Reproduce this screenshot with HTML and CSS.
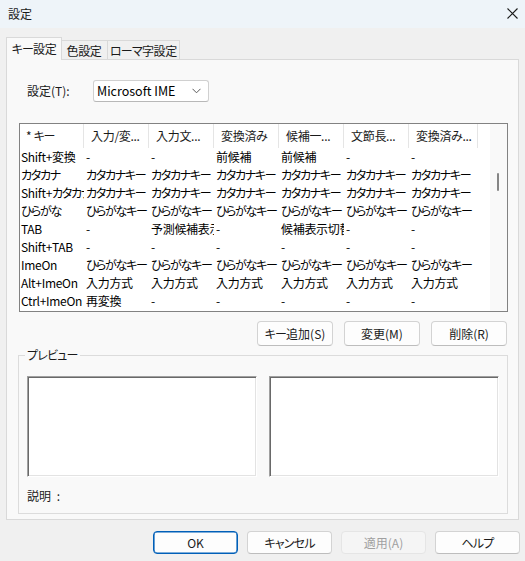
FILE: index.html
```html
<!DOCTYPE html>
<html lang="ja">
<head>
<meta charset="utf-8">
<title>設定</title>
<link rel="stylesheet" href="styles.css">
</head>
<body>
<div class="dialog">
  <div class="titlebar">
    <span class="title">設定</span>
    <svg class="close" width="11" height="11" viewBox="0 0 11 11"><path d="M0.5 0.5L10.5 10.5M10.5 0.5L0.5 10.5" stroke="#1a1a1a" stroke-width="1.1" fill="none"/></svg>
  </div>
  <div class="tabs">
    <div class="tab active"><span class="k">キー</span>設定</div>
    <div class="tab t2">色設定</div>
    <div class="tab t3"><span class="k">ローマ</span>字設定</div>
  </div>
  <div class="panel">
    <div class="setting-row">
      <span class="label">設定(T):</span>
      <div class="combo">
        <span>Microsoft IME</span>
        <svg class="chev" width="9" height="6" viewBox="0 0 9 6"><path d="M0.5 0.8L4.5 4.8L8.5 0.8" stroke="#5a5a5a" stroke-width="1" fill="none"/></svg>
      </div>
    </div>
    <div class="list">
      <div class="list-body">
        <div class="row header">
          <div class="cell c1">* <span class="k">キー</span></div>
          <div class="cell">入力/変...</div>
          <div class="cell">入力文...</div>
          <div class="cell">変換済み</div>
          <div class="cell">候補一...</div>
          <div class="cell">文節長...</div>
          <div class="cell c7">変換済み...</div>
        </div>
        <div class="row"><div class="cell c1">Shift+変換</div><div class="cell">-</div><div class="cell">-</div><div class="cell">前候補</div><div class="cell">前候補</div><div class="cell">-</div><div class="cell c7">-</div></div>
        <div class="row"><div class="cell c1 k">カタカナ</div><div class="cell k">カタカナキー</div><div class="cell k">カタカナキー</div><div class="cell k">カタカナキー</div><div class="cell k">カタカナキー</div><div class="cell k">カタカナキー</div><div class="cell c7 k">カタカナキー</div></div>
        <div class="row"><div class="cell c1">Shift+<span class="k">カタカナ</span></div><div class="cell k">カタカナキー</div><div class="cell k">カタカナキー</div><div class="cell k">カタカナキー</div><div class="cell k">カタカナキー</div><div class="cell k">カタカナキー</div><div class="cell c7 k">カタカナキー</div></div>
        <div class="row"><div class="cell c1 k">ひらがな</div><div class="cell k">ひらがなキー</div><div class="cell k">ひらがなキー</div><div class="cell k">ひらがなキー</div><div class="cell k">ひらがなキー</div><div class="cell k">ひらがなキー</div><div class="cell c7 k">ひらがなキー</div></div>
        <div class="row"><div class="cell c1">TAB</div><div class="cell">-</div><div class="cell">予測候補表示</div><div class="cell">-</div><div class="cell">候補表示切替</div><div class="cell">-</div><div class="cell c7">-</div></div>
        <div class="row"><div class="cell c1">Shift+TAB</div><div class="cell">-</div><div class="cell">-</div><div class="cell">-</div><div class="cell">-</div><div class="cell">-</div><div class="cell c7">-</div></div>
        <div class="row"><div class="cell c1">ImeOn</div><div class="cell k">ひらがなキー</div><div class="cell k">ひらがなキー</div><div class="cell k">ひらがなキー</div><div class="cell k">ひらがなキー</div><div class="cell k">ひらがなキー</div><div class="cell c7 k">ひらがなキー</div></div>
        <div class="row"><div class="cell c1">Alt+ImeOn</div><div class="cell">入力方式</div><div class="cell">入力方式</div><div class="cell">入力方式</div><div class="cell">入力方式</div><div class="cell">入力方式</div><div class="cell c7">入力方式</div></div>
        <div class="row"><div class="cell c1">Ctrl+ImeOn</div><div class="cell">再変換</div><div class="cell">-</div><div class="cell">-</div><div class="cell">-</div><div class="cell">-</div><div class="cell c7">-</div></div>
      </div>
      <div class="scrollbar"><div class="thumb"></div></div>
    </div>
    <div class="btn-row">
      <button class="btn"><span class="k">キー</span>追加(S)</button>
      <button class="btn">変更(M)</button>
      <button class="btn">削除(R)</button>
    </div>
    <div class="group">
      <span class="group-label k">プレビュー</span>
      <div class="previews">
        <div class="preview"></div>
        <div class="preview"></div>
      </div>
      <div class="desc">説明 :</div>
    </div>
  </div>
  <div class="footer">
    <button class="fbtn ok">OK</button>
    <button class="fbtn"><span class="k">キャンセル</span></button>
    <button class="fbtn disabled">適用(A)</button>
    <button class="fbtn"><span class="k">ヘルプ</span></button>
  </div>
</div>
</body>
</html>
```

FILE: styles.css
```css
* { box-sizing: border-box; }
html, body {
  margin: 0;
  padding: 0;
}
body {
  width: 525px;
  height: 561px;
  background: #f0f0f0;
  font-family: "Noto Sans CJK JP", sans-serif;
  font-size: 12px;
  font-feature-settings: "palt";
  color: #000;
  overflow: hidden;
}
.k { letter-spacing: -1.3px; }
.dialog {
  width: 525px;
  height: 561px;
}
.titlebar {
  height: 28px;
  background: #eef4f9;
  display: flex;
  align-items: center;
  justify-content: space-between;
  padding: 0 7px 0 8px;
}
.title {
  font-size: 12px;
  line-height: 14px;
  color: #1a1a1a;
}
.close { display: block; margin-top: -1px; }

.tabs {
  margin-top: 9px;
  padding-left: 6px;
  height: 22px;
  display: flex;
  align-items: flex-start;
}
.tab {
  height: 19px;
  margin-top: 3px;
  border: 1px solid #d9d9d9;
  border-bottom: none;
  background: #f0f0f0;
  display: flex;
  align-items: center;
  justify-content: center;
  line-height: 14px;
  padding-top: 1px;
  color: #1a1a1a;
  letter-spacing: -0.3px;
}
.tab .k { letter-spacing: -0.8px; }
.tab.active {
  position: relative;
  z-index: 1;
  width: 56px;
  height: 23px;
  margin-top: 0;
  background: #f9f9f9;
  padding-top: 0;
  padding-bottom: 1px;
}
.tab.t2 { width: 47px; margin-left: -1px; border-left: none; }
.tab.t3 { width: 73px; margin-left: -1px; }

.panel {
  margin-left: 6px;
  width: 513px;
  height: 461px;
  border: 1px solid #d9d9d9;
  background: #f9f9f9;
  padding: 20px 0 0 0;
}
.setting-row {
  display: flex;
  align-items: center;
  padding-left: 20px;
  height: 22px;
}
.label {
  width: 66px;
  line-height: 14px;
  color: #1a1a1a;
}
.combo {
  width: 116px;
  height: 22px;
  border: 1px solid #d0d0d0;
  border-bottom-color: #b8b8b8;
  border-radius: 3px;
  background: #fff;
  display: flex;
  align-items: center;
  justify-content: space-between;
  padding: 0 7px 0 3px;
  font-size: 12.5px;
  line-height: 14px;
}
.chev { display: block; }

.list {
  margin-top: 21px;
  margin-left: 12px;
  width: 489px;
  height: 189px;
  border: 1px solid #828282;
  display: flex;
  background: #fff;
}
.list-body {
  flex: 1;
  overflow: hidden;
}
.row {
  display: grid;
  grid-template-columns: 64px 65px 65px 65px 65px 65px 69px;
  height: 18px;
  line-height: 18px;
}
.row.header {
  height: 24px;
  line-height: 24px;
  color: #1a1a1a;
}
.cell {
  overflow: hidden;
  white-space: nowrap;
  padding-left: 2px;
  letter-spacing: -0.3px;
}
.cell.k { letter-spacing: -1.3px; }
.cell.c1 { padding-left: 1px; }
.header .cell {
  padding-left: 7px;
  border-right: 1px solid #e5e5e5;
}
.header .cell.c1 { padding-left: 6px; }
.scrollbar {
  width: 17px;
  background: #f9f9f9;
  position: relative;
}
.thumb {
  position: absolute;
  left: 7px;
  top: 49px;
  width: 2px;
  height: 18px;
  border-radius: 1px;
  background: #868686;
}

.btn-row {
  margin-top: 9px;
  display: flex;
  justify-content: flex-end;
  gap: 11px;
  padding-right: 11px;
}
.btn, .fbtn {
  font-family: "Noto Sans CJK JP", sans-serif;
  font-size: 12px;
  font-feature-settings: "palt";
  color: #1a1a1a;
  background: #fdfdfd;
  border: 1px solid #d3d3d3;
  border-bottom-color: #bdbdbd;
  border-radius: 4px;
  padding: 0;
  line-height: 14px;
}
.btn .k, .fbtn .k { letter-spacing: -0.8px; }
.btn {
  width: 76px;
  height: 25px;
}

.group {
  position: relative;
  margin-top: 9px;
  margin-left: 11px;
  width: 490px;
  height: 159px;
  border: 1px solid #dcdcdc;
  padding: 20px 0 0 8px;
}
.group-label {
  position: absolute;
  top: -9px;
  left: 6px;
  padding: 0 2px;
  background: #f9f9f9;
  line-height: 16px;
  color: #1a1a1a;
  letter-spacing: -0.8px;
}
.previews {
  display: flex;
  gap: 12px;
}
.preview {
  width: 230px;
  height: 101px;
  background: #fff;
  border: 1px solid;
  border-color: #a0a0a0 #ffffff #ffffff #a0a0a0;
  box-shadow: inset 1px 1px 0 #696969, inset -1px -1px 0 #e3e3e3;
}
.desc {
  margin-top: 12px;
  line-height: 14px;
  color: #1a1a1a;
  word-spacing: 3px;
}

.footer {
  margin-top: 11px;
  display: flex;
  justify-content: flex-end;
  gap: 9px;
  padding-right: 5px;
}
.fbtn {
  width: 85px;
  height: 23px;
}
.fbtn.ok {
  border: 1px solid #005fb8;
  box-shadow: inset 0 0 0 0.6px #005fb8;
}
.fbtn.disabled {
  color: #a0a0a0;
  background: #f5f5f5;
  border-color: #e5e5e5;
}
```
